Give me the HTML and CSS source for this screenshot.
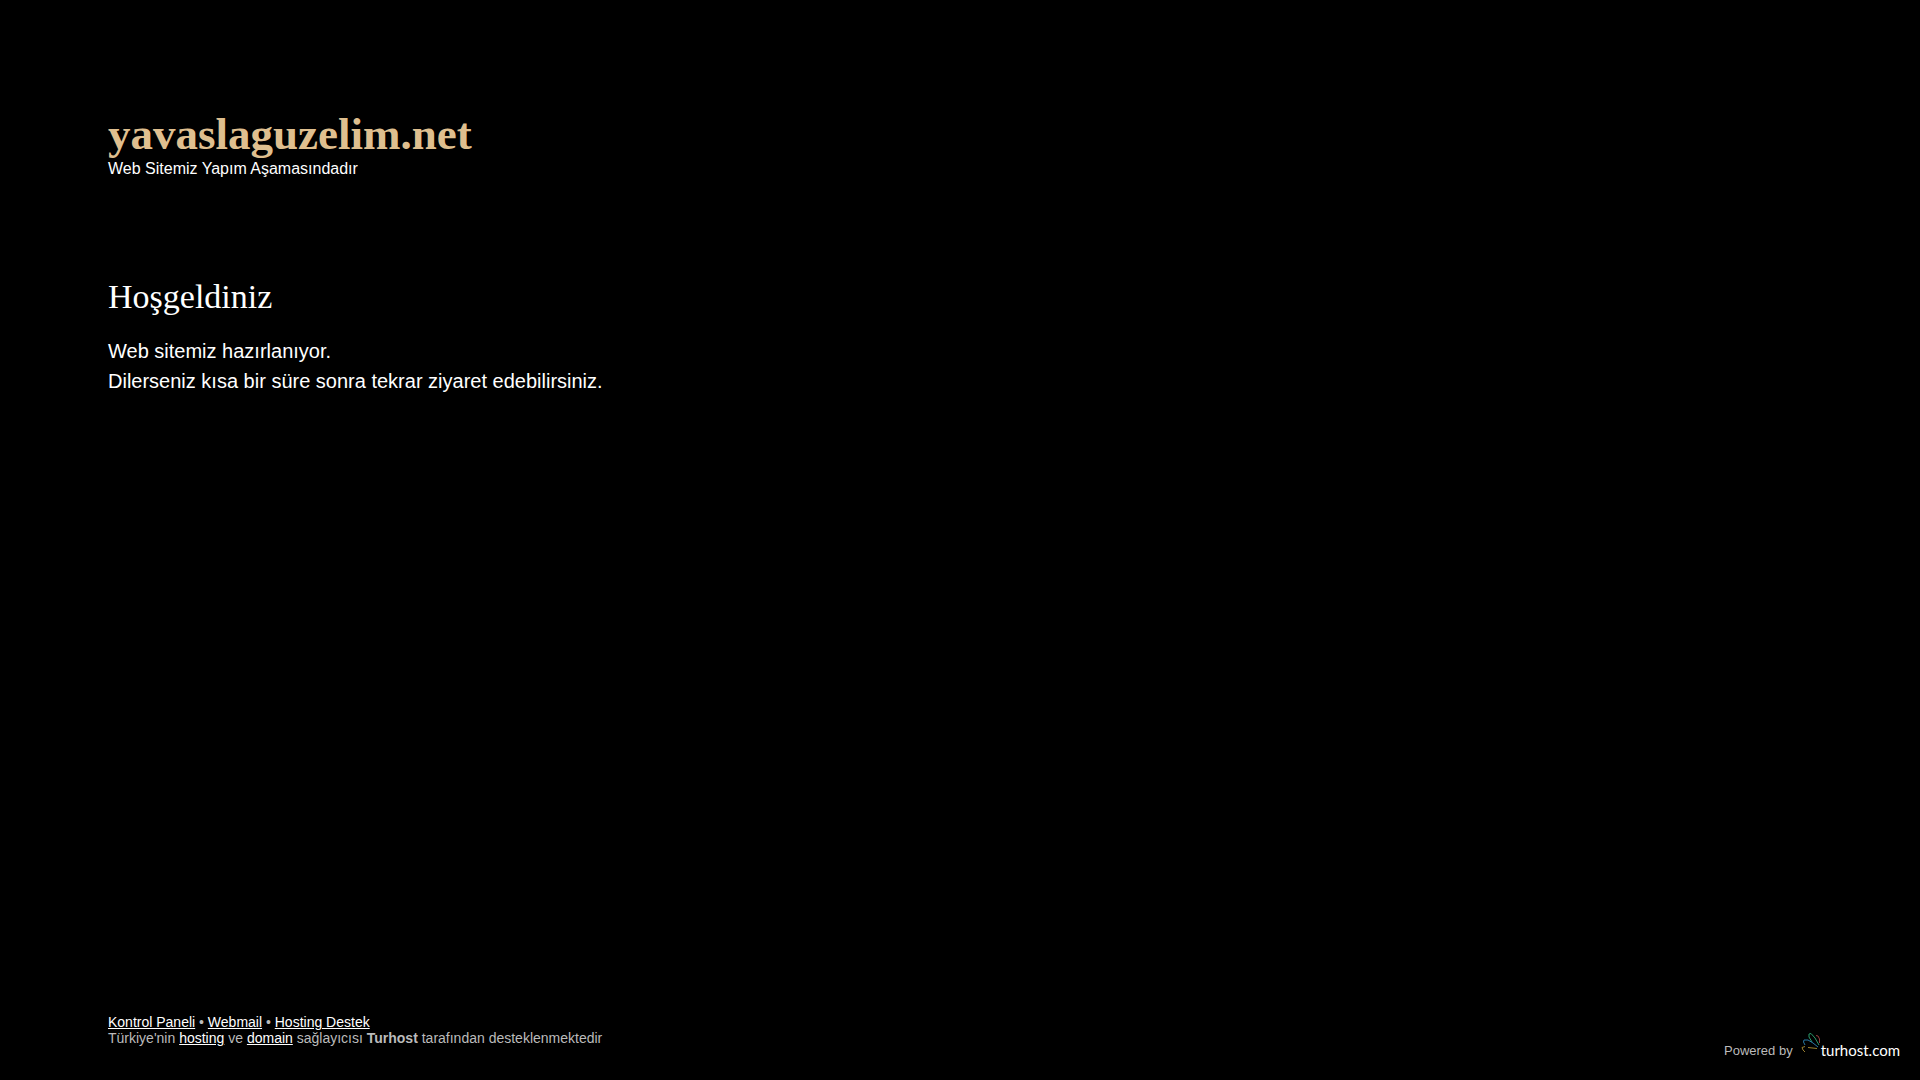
FILE: index.html
```
<!DOCTYPE html>
<html lang="tr">
<head>
    <meta charset="UTF-8">
    <meta name="viewport" content="width=device-width, initial-scale=1.0">
    <title>yavaslaguzelim.net</title>
    <link rel="stylesheet" href="styles.css">
</head>
<body>
    <header class="header">
        <h1>yavaslaguzelim.net</h1>
        <p>Web Sitemiz Yapım Aşamasındadır</p>
    </header>

    <main class="content">
        <h2>Hoşgeldiniz</h2>
        <p>Web sitemiz hazırlanıyor.<br>Dilerseniz kısa bir süre sonra tekrar ziyaret edebilirsiniz.</p>
    </main>

    <footer class="footer">
        <div class="links">
            <a href="#">Kontrol Paneli</a> • <a href="#">Webmail</a> • <a href="#">Hosting Destek</a><br>
            Türkiye'nin <a href="#">hosting</a> ve <a href="#">domain</a> sağlayıcısı <strong>Turhost</strong> tarafından desteklenmektedir
        </div>
        <div class="powered">
            <span>Powered by</span>
            <a class="logo" href="#">
                <svg width="20" height="22" viewBox="0 0 20 22" fill="none" aria-hidden="true">
                    <path d="M11 10L8 5L8 2L10 1.5L14 6L18 13" stroke="#2a9a6c"/>
                    <path d="M15 3.5L17 4L18.5 7L18.5 11" stroke="#8f3c3c"/>
                    <path d="M4 13L2.5 10L3 8L7 8L12 11L17 15" stroke="#2878a5"/>
                    <path d="M4 20L2 18L1 15.5L4 14.5M7 15.5L16 16.5" stroke="#9c822f"/>
                </svg>
                <span>turhost.com</span>
            </a>
        </div>
    </footer>
</body>
</html>
```
FILE: styles.css
```
* {
    box-sizing: border-box;
}
body {
    display: flex;
    flex-direction: column;
    min-height: 100vh;
    margin: 0;
    padding: 108px 20px 20px 108px;
    background-color: #000;
    color: #fff;
    font-family: "Liberation Sans", Arial, sans-serif;
    font-size: 16px;
}
h1, h2, p {
    margin: 0;
}
h1, h2 {
    font-family: "Liberation Serif", "Times New Roman", serif;
}
.header h1 {
    color: #dfbf8f;
    font-size: 45px;
    line-height: 52px;
}
.header p {
    line-height: 18px;
}
.content {
    flex: 1;
    padding-top: 100px;
}
.content h2 {
    margin-bottom: 20px;
    font-size: 34px;
    font-weight: normal;
    line-height: 38px;
}
.content p {
    font-size: 20px;
    line-height: 30px;
}
.footer {
    display: flex;
    justify-content: space-between;
    align-items: flex-end;
    color: #bbb;
}
.footer a {
    color: #fff;
}
.links {
    padding-bottom: 14px;
    font-size: 14px;
    line-height: 16px;
}
.powered {
    display: flex;
    align-items: flex-end;
    gap: 8px;
    font-size: 13px;
    line-height: 18px;
}
.footer .logo {
    display: flex;
    align-items: flex-end;
    font-family: Lato, sans-serif;
    font-size: 15px;
    line-height: 20px;
    text-decoration: none;
}
.logo svg {
    margin-bottom: 6px;
}
```
